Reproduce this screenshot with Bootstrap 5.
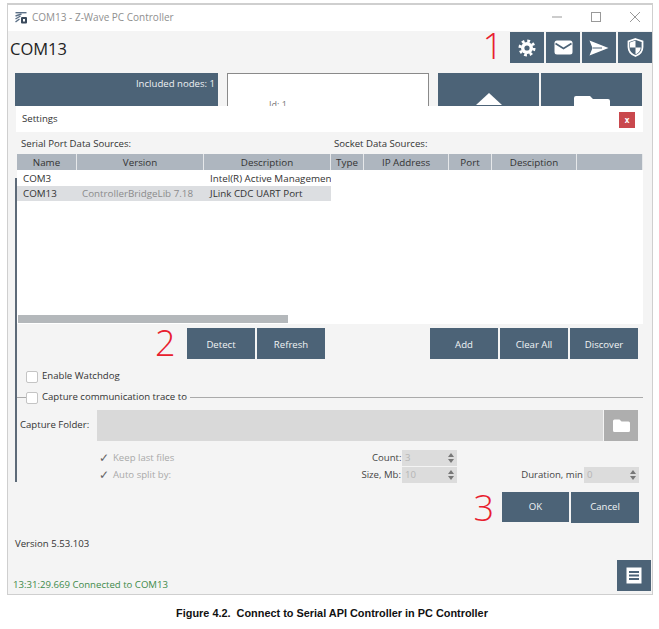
<!DOCTYPE html>
<html lang="en"><head><meta charset="utf-8"><title>Z-Wave PC Controller</title>
<link href="https://cdn.jsdelivr.net/npm/bootstrap@5.3.0/dist/css/bootstrap.min.css" rel="stylesheet">
<style>
html,body{background:#fff;height:629px;overflow:hidden}
body{font-family:"Open Sans","Noto Sans",sans-serif;font-size:9.6px;color:#333;padding:3px 6px 0 7px}
.zw-win{position:relative;height:592px;border:1.5px solid #cfcfcf;border-top-width:2px;background:#f4f4f4;display:flex;flex-direction:column}
.zw-title{height:26px;background:#fff;color:#8f8f8f;font-size:10px;padding:0 8px 2px 7px;gap:5px}
.zw-ctl{margin-left:auto;gap:25px;padding-right:2px}
.zw-head{height:42px;padding:1px 0 0 2px;align-items:flex-start}
.zw-com{font-size:16.5px;color:#222;line-height:31px;margin-top:1px}
.zw-red{color:#e8202e;font-size:36px;line-height:1;font-weight:300}
.zw-head .zw-red{margin:-4px 7px 0 auto}
.zw-btn{background:#4c6377;color:#f0f3f5;border:0;border-radius:0;font-size:9.6px;display:flex;align-items:center;justify-content:center;padding:0}
.zw-btn:hover,.zw-btn:active{background:#4c6377!important;color:#fff!important}
.zw-hb{width:34px;height:31px}
.zw-gap{gap:2px}
.zw-top{padding:0 0 0 7px;gap:9px;height:33px;overflow:hidden}
.zw-nodes{width:203px;flex:none;background:#4c6377;color:#eef1f3;text-align:right;padding:4px 3px 0 0;height:33px}
.zw-card{width:202px;flex:none;height:33px;background:#fff;border:1px solid #8a8a8a;border-bottom:0;padding:24px 0 0 41px;color:#777;font-size:9px;overflow:hidden}
.zw-big{width:101px;flex:none;height:33px;background:#4c6377;overflow:hidden;display:flex;justify-content:center;align-items:flex-start;padding-top:20px}
.zw-dlg{position:absolute;left:8px;top:101px;width:627px;height:376px;background:#f4f4f4;display:flex;flex-direction:column}
.zw-dlg>*{flex:none}
.zw-dlg::before{content:"";position:absolute;left:-1px;top:72px;bottom:0;width:1.5px;background:#5d6a78}
.zw-dt{height:26px;background:#fff;padding:1px 6px 0;color:#333}
.zw-x{width:16px;height:16px;background:#c9484d;color:#fff;font-size:8px;font-weight:700;line-height:15px;text-align:center;margin-left:auto;margin-right:2px}
.zw-src{height:22px;padding:5px 5px 0 5px;color:#333;white-space:nowrap}
.zw-src span:first-child{width:313px}
.zw-grid{height:170px;margin:0 0 0 1px;background:#fff;display:flex;flex-direction:column}
.zw-tb{table-layout:fixed;width:626px;margin:0;font-size:9.8px;line-height:1;--bs-table-bg:transparent;border-collapse:separate;border-spacing:0}
.zw-tb th{background:#aeb6bf;font-weight:400;text-align:center;color:#333;height:16px;padding:1px 0 0;border:0;border-right:1px solid #e6e8ea;vertical-align:middle}
.zw-tb td{padding:2px 0 0 6px;height:15.5px;border:0;white-space:nowrap;overflow:hidden;color:#333;vertical-align:middle}
.zw-tb .zw-sel{background:#dcdee1}
.zw-tb .zw-ver{color:#8b8b8b;padding-left:5px}
.zw-hs{margin-top:auto;height:8px;width:270px;background:#b4b8bb;margin-left:1px;margin-bottom:1px}
.zw-act{padding:4px 5px 0 171px;height:36px}
.zw-ab{width:68px;height:31px;padding-top:3px}
.zw-box{width:12px;height:12px;background:#fff;border:1px solid #c4c4c4;border-radius:2px;margin-right:4px;flex:none}
.zw-w{height:21px;padding-left:10px;margin-top:6px}
.zw-cap{height:21px;padding-left:10px;position:relative}
.zw-cap::before{content:"";position:absolute;left:1px;right:0;top:10px;height:1px;background:#aaa}
.zw-cap>*{position:relative}
.zw-cap span{background:#f4f4f4;padding-left:4px;padding-right:3px;margin-left:-4px}
.zw-fold{padding:0 5px 0 4px;height:31px;margin-top:2px}
.zw-fold label{width:77px;color:#333}
.zw-fi{flex:1;background:#d9d9d9;height:31px}
.zw-fb{width:34px;height:31px;background:#aeaeae;margin-left:1px;display:flex;align-items:center;justify-content:center}
.zw-opt{padding:0 4px 0 0;height:17px;color:#a9a9a9}
.zw-l1{margin-top:8.5px}
.zw-chk{margin-left:83px;width:14px;color:#666;font-size:12px;line-height:1}
.zw-lb{color:#444}
.zw-spin{width:55px;height:16px;background:#dcdcdc;color:#b5b5b5;padding-left:3px;display:flex;align-items:center;justify-content:space-between;margin-left:1px}
.zw-ar{display:flex;flex-direction:column;gap:2px;margin-right:3px}
.zw-ar i{display:block;width:0;height:0;border:3.5px solid transparent}
.zw-ar i:first-child{border-bottom:4px solid #777;border-top:0}
.zw-ar i:last-child{border-top:4px solid #777;border-bottom:0}
.zw-ok{position:absolute;top:483px;right:13px;gap:2px;align-items:center}
.zw-ok .zw-red{margin-right:6px;margin-top:2px}
.zw-main{flex:1}
.zw-two{position:absolute;left:147px;top:320px}
.zw-ver5{position:absolute;left:7px;top:532px;color:#333}
.zw-st{position:absolute;left:5px;top:573px;color:#3d8a4a}
.zw-lst{position:absolute;right:1px;top:555px}
.zw-fig{font-family:"Liberation Sans",sans-serif;font-weight:700;font-size:10.9px;color:#111;text-align:center;margin-top:10px;padding-left:4px}
</style></head><body>
<div class="zw-win">
 <div class="zw-title d-flex align-items-center">
  <svg width="12" height="13" viewBox="0 0 12 13"><rect x=".5" y="1" width="11" height="1.4" fill="#5a6f86"/><path d="M.5 5l6-2M.5 8l5-3M.5 11l4-3" stroke="#5a6f86" stroke-width="1.4"/><rect x="6" y="6" width="6" height="6.5" rx="1" fill="#3a4a5c"/><rect x="8" y="8" width="2" height="2.5" fill="#fff"/></svg>
  <span>COM13 - Z-Wave PC Controller</span>
  <div class="zw-ctl d-flex align-items-center">
   <svg width="14" height="12" viewBox="0 0 14 12"><path d="M2 6h10" stroke="#999"/></svg>
   <svg width="14" height="12" viewBox="0 0 14 12"><rect x="2.500" y="1.500" width="9" height="9" fill="none" stroke="#999"/></svg>
   <svg width="14" height="12" viewBox="0 0 14 12"><path d="M2 1l10 10M12 1L2 11" stroke="#999"/></svg>
  </div>
 </div>
 <div class="zw-head d-flex">
  <div class="zw-com">COM13</div>
  <div class="zw-red">1</div>
  <div class="d-flex zw-gap">
   <button class="btn zw-btn zw-hb" aria-label="Settings"><svg width="18" height="18" viewBox="0 0 18 18"><circle cx="9" cy="9" r="6" fill="#fff"/><circle cx="9" cy="9" r="7" fill="none" stroke="#fff" stroke-width="3" stroke-dasharray="2.75 2.75"/><circle cx="9" cy="9" r="2.6" fill="#4c6377"/></svg></button>
   <button class="btn zw-btn zw-hb" aria-label="Mail"><svg width="19" height="15" viewBox="0 0 19 15"><rect x=".5" y=".5" width="18" height="14" rx="2.5" fill="#fff"/><path d="M1.500 3.500l8 5 8-5" fill="none" stroke="#4c6377" stroke-width="1.7"/></svg></button>
   <button class="btn zw-btn zw-hb" aria-label="Send"><svg width="20" height="16" viewBox="0 0 20 16"><path d="M.5.5L19.500 8 .5 15.500l3-7.500z" fill="#fff"/><path d="M4 8h9" stroke="#4c6377" stroke-width="1"/></svg></button>
   <button class="btn zw-btn zw-hb" aria-label="Security"><svg width="17" height="19" viewBox="0 0 17 19"><path d="M8.500 1l7 2.500V9c0 4.500-3 7.500-7 9-4-1.500-7-4.500-7-9V3.500z" fill="none" stroke="#fff" stroke-width="1.800"/><path d="M8.500 2.500L3 4.500V9.500h5.500zM8.500 9.500V16.500c3-1.300 5-3.700 5.300-7z" fill="#fff"/></svg></button>
  </div>
 </div>
 <div class="zw-top d-flex">
  <div class="zw-nodes">Included nodes: 1</div>
  <div class="zw-card">Id: 1</div>
  <div class="d-flex zw-gap">
   <div class="zw-big"><svg width="26" height="14" viewBox="0 0 26 14"><path d="M13 0L26 12H0z" fill="#fff"/></svg></div>
   <div class="zw-big"><svg width="36" height="14" viewBox="0 0 36 14"><path d="M0 5a2 2 0 012-2h14l3 3h15a2 2 0 012 2v6H0z" fill="#fff"/></svg></div>
  </div>
 </div>
 <div class="zw-main"></div>

 <div class="zw-dlg">
  <div class="zw-dt d-flex align-items-center"><span>Settings</span><div class="zw-x">x</div></div>
  <div class="zw-src d-flex"><span>Serial Port Data Sources:</span><span>Socket Data Sources:</span></div>
  <div class="zw-grid">
   <table class="table zw-tb">
    <colgroup><col style="width:60px"><col style="width:127px"><col style="width:127px"><col style="width:33px"><col style="width:85px"><col style="width:43px"><col style="width:85px"><col></colgroup>
    <thead><tr><th>Name</th><th>Version</th><th>Description</th><th>Type</th><th>IP Address</th><th>Port</th><th>Desciption</th><th></th></tr></thead>
    <tbody>
     <tr><td>COM3</td><td></td><td>Intel(R) Active Management Technology</td><td colspan="5"></td></tr>
     <tr><td class="zw-sel">COM13</td><td class="zw-sel zw-ver">ControllerBridgeLib 7.18</td><td class="zw-sel">JLink CDC UART Port</td><td colspan="5"></td></tr>
    </tbody>
   </table>
   <div class="zw-hs"></div>
  </div>
  <div class="zw-act d-flex">
   <div class="d-flex zw-gap"><button class="btn zw-btn zw-ab">Detect</button><button class="btn zw-btn zw-ab">Refresh</button></div>
   <div class="d-flex zw-gap ms-auto"><button class="btn zw-btn zw-ab">Add</button><button class="btn zw-btn zw-ab">Clear All</button><button class="btn zw-btn zw-ab">Discover</button></div>
  </div>
  <div class="zw-w d-flex align-items-center"><div class="zw-box"></div>Enable Watchdog</div>
  <div class="zw-cap d-flex align-items-center"><div class="zw-box"></div><span>Capture communication trace to</span></div>
  <div class="zw-fold d-flex align-items-center"><label>Capture Folder:</label><div class="zw-fi"></div><div class="zw-fb"><svg width="17" height="13" viewBox="0 0 17 13"><path d="M0 2a1.500 1.500 0 011.500-1.500h5l2 2h7A1.500 1.500 0 0117 4v7.500a1.500 1.500 0 01-1.500 1.500h-14A1.500 1.500 0 010 11.500z" fill="#fff"/></svg></div></div>
  <div class="zw-opt zw-l1 d-flex align-items-center"><span class="zw-chk">✓</span><span style="width:259px">Keep last files</span><span class="zw-lb" style="width:29px;text-align:right">Count:</span><div class="zw-spin"><span>3</span><span class="zw-ar"><i></i><i></i></span></div></div>
  <div class="zw-opt d-flex align-items-center"><span class="zw-chk">✓</span><span style="width:245px">Auto split by:</span><span class="zw-lb" style="width:43px;text-align:right">Size, Mb:</span><div class="zw-spin"><span>10</span><span class="zw-ar"><i></i><i></i></span></div><span class="zw-lb ms-auto">Duration, min</span><div class="zw-spin"><span>0</span><span class="zw-ar"><i></i><i></i></span></div></div>
 </div>

 <div class="zw-ok d-flex"><div class="zw-red">3</div><button class="btn zw-btn" style="width:67px;height:30px">OK</button><button class="btn zw-btn" style="width:68px;height:31px">Cancel</button></div>
 <div class="zw-red zw-two">2</div>
 <div class="zw-ver5">Version 5.53.103</div>
 <div class="zw-st">13:31:29.669 Connected to COM13</div>
 <button class="btn zw-btn zw-hb zw-lst" aria-label="Log"><svg width="16" height="17" viewBox="0 0 16 17"><rect x=".5" y=".5" width="15" height="16" fill="#fff"/><path d="M3 5h10M3 8.500h10M3 12h10" stroke="#4c6377" stroke-width="1.800"/></svg></button>
</div>
<div class="zw-fig">Figure 4.2.&nbsp; Connect to Serial API Controller in PC Controller</div>
</body></html>
